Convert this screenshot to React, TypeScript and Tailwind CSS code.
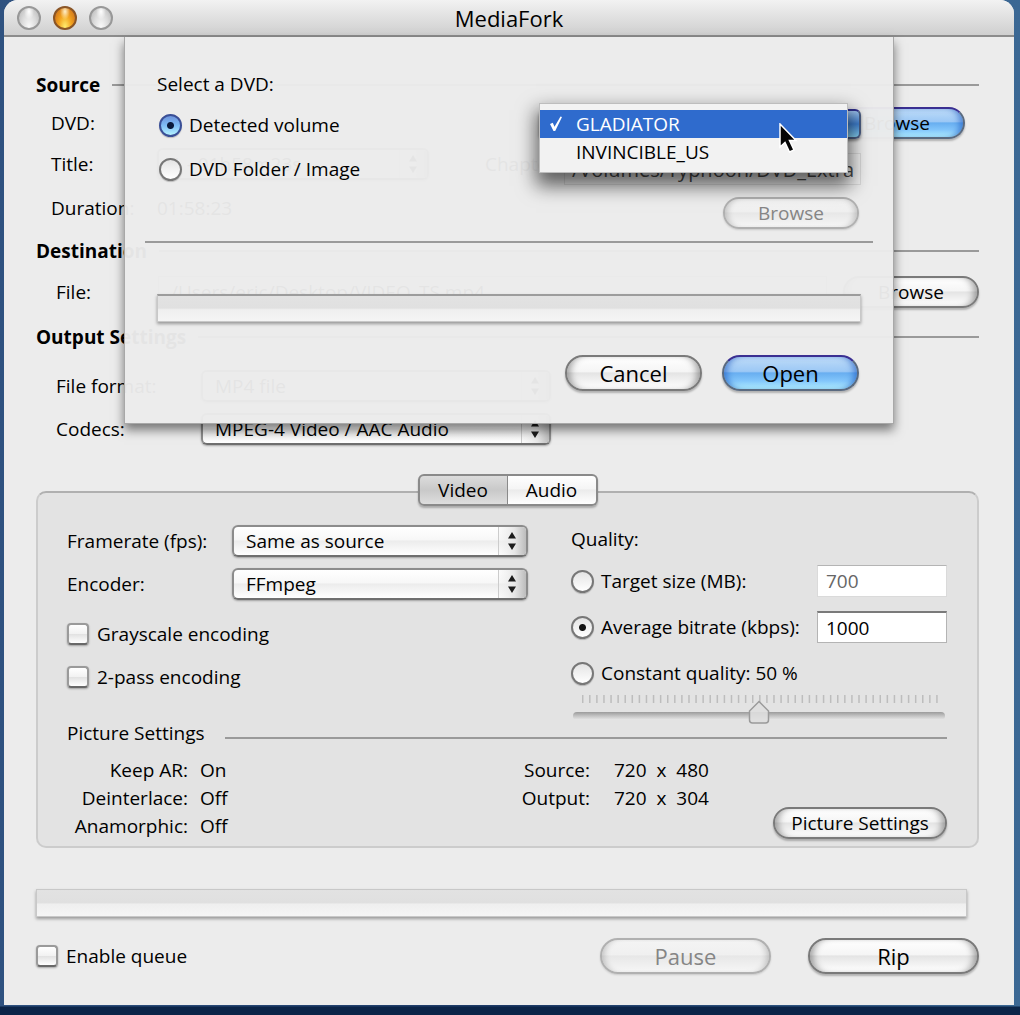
import { useState } from "react";
import type { ReactNode } from "react";
import clsx from "clsx";

const FIELD_ROW = "flex h-8 items-center";

function PushButton({
  children,
  variant = "plain",
  size = "small",
  disabled,
  className,
}: {
  children: ReactNode;
  variant?: "plain" | "default";
  size?: "small" | "large";
  disabled?: boolean;
  className?: string;
}) {
  return (
    <button
      type="button"
      disabled={disabled}
      className={clsx(
        "shrink-0 rounded-full border-2 text-center whitespace-nowrap",
        size === "large" ? "h-9 text-[22px] leading-[30px]" : "h-8 text-[19px] leading-7",
        variant === "default" &&
          "border-[#5a6a80] border-t-[#3a2f92] bg-[linear-gradient(#bfdcf8_0%,#9cc8f5_45%,#68aef0_50%,#83c6fb_75%,#b4f1ff_100%)] text-black shadow-[0_2px_2px_rgba(0,0,0,0.25),inset_6px_0_6px_-3px_rgba(25,85,190,0.6),inset_-6px_0_6px_-3px_rgba(25,85,190,0.6)]",
        variant === "plain" &&
          !disabled &&
          "border-[#7a7a7a] bg-[linear-gradient(#ffffff_0%,#f5f5f5_46%,#e4e4e4_50%,#f2f2f2_75%,#ffffff_100%)] text-black shadow-[0_2px_2px_rgba(0,0,0,0.25),inset_7px_0_7px_-4px_rgba(0,0,0,0.35),inset_-7px_0_7px_-4px_rgba(0,0,0,0.35)]",
        variant === "plain" &&
          disabled &&
          "border-[#b0b0b0] bg-[linear-gradient(#f4f4f4_0%,#f0f0f0_46%,#e7e7e7_50%,#f6f6f6_100%)] text-[#858585] shadow-[0_1px_2px_rgba(0,0,0,0.15),inset_6px_0_6px_-4px_rgba(0,0,0,0.2),inset_-6px_0_6px_-4px_rgba(0,0,0,0.2)]",
        className,
      )}
    >
      {children}
    </button>
  );
}

function PopUp({ id, options, className }: { id: string; options: string[]; className?: string }) {
  return (
    <div className={clsx("relative", className)}>
      <select
        id={id}
        className="h-8 w-full appearance-none rounded-md border-2 border-[#8c8c8c] border-b-[#6f6f6f] bg-[linear-gradient(#ffffff_0%,#f7f7f7_46%,#ececec_50%,#ffffff_100%)] pr-8 pl-3 text-[19px] leading-7 text-black shadow-[0_1px_2px_rgba(0,0,0,0.3)]"
      >
        {options.map((o) => (
          <option key={o}>{o}</option>
        ))}
      </select>
      <svg
        className="pointer-events-none absolute top-0.5 right-0.5 h-7 w-7"
        viewBox="0 0 28 28"
        aria-hidden="true"
      >
        <defs>
          <linearGradient id={`${id}-cap`} x1="0" x2="1" y1="0" y2="0">
            <stop offset="0" stopColor="#f4f4f4" stopOpacity="0.3" />
            <stop offset="0.6" stopColor="#e6e6e6" />
            <stop offset="1" stopColor="#bcbcbc" />
          </linearGradient>
        </defs>
        <path d="M0 0h24q4 0 4 4v20q0 4-4 4H0z" fill={`url(#${id}-cap)`} />
        <path d="M0.5 0v28" stroke="#cccccc" />
        <path d="M14 5l4 6.500h-8zM14 23l4-6.500h-8z" fill="#1c1c1c" />
      </svg>
    </div>
  );
}

function Radio({
  id,
  name,
  label,
  checked,
  onChange,
  blue,
}: {
  id: string;
  name: string;
  label: string;
  checked: boolean;
  onChange: () => void;
  blue?: boolean;
}) {
  return (
    <div className="flex items-center gap-[7px]">
      <input
        id={id}
        name={name}
        type="radio"
        checked={checked}
        onChange={onChange}
        className={clsx(
          "size-[23px] shrink-0 appearance-none rounded-full border-2 shadow-[0_1px_1px_rgba(0,0,0,0.2)]",
          blue
            ? "border-[#777777] bg-[linear-gradient(#e4e4e4,#ffffff)] checked:border-[#3a4f96] checked:bg-[radial-gradient(circle_at_50%_50%,#0b1a3c_0,#0b1a3c_3px,transparent_4px),linear-gradient(#6d93dc,#7fbdf6_50%,#b5f2ff)]"
            : "border-[#777777] bg-[linear-gradient(#e4e4e4,#ffffff)] checked:bg-[radial-gradient(circle_at_50%_50%,#141414_0,#141414_3px,transparent_4px),linear-gradient(#e4e4e4,#ffffff)]",
        )}
      />
      <label htmlFor={id} className="whitespace-nowrap">
        {label}
      </label>
    </div>
  );
}

function CheckBox({ id, label }: { id: string; label: string }) {
  return (
    <div className="flex h-6 items-center gap-2">
      <input
        id={id}
        type="checkbox"
        className="size-[22px] shrink-0 appearance-none rounded-[4px] border-2 border-[#9a9a9a] border-b-[#686868] bg-[linear-gradient(#ffffff_0%,#f2f2f2_48%,#e2e2e2_52%,#ffffff_100%)] shadow-[0_1px_2px_rgba(0,0,0,0.3)] checked:bg-[linear-gradient(#b9d8f8,#5fa8ee)]"
      />
      <label htmlFor={id}>{label}</label>
    </div>
  );
}

function SectionTitle({ children, className }: { children: string; className?: string }) {
  return (
    <div className={clsx("flex h-6 items-center gap-3", className)}>
      <h2 className="font-bold">{children}</h2>
      <div className="h-0.5 flex-1 bg-[#9a9a9a]" />
    </div>
  );
}

function TrafficLight({ label, amber }: { label: string; amber?: boolean }) {
  return (
    <button
      type="button"
      aria-label={label}
      className={clsx(
        "size-6 rounded-full border-2",
        amber
          ? "border-[#8a5526] bg-[radial-gradient(ellipse_at_50%_18%,#fff0c8_0,transparent_35%),radial-gradient(ellipse_at_50%_95%,#ffee70_0,#f3a41f_45%,#c3631a_100%)]"
          : "border-[#989898] bg-[radial-gradient(ellipse_at_50%_18%,#ffffff_0,transparent_35%),radial-gradient(ellipse_at_50%_95%,#fafafa_0,#dcdcdc_50%,#b4b4b4_100%)]",
      )}
    />
  );
}

function ProgressBar({ label, className }: { label: string; className?: string }) {
  return (
    <div
      role="progressbar"
      aria-label={label}
      aria-valuenow={0}
      className={clsx(
        "h-7 border border-[#c8c8c8] bg-[linear-gradient(#e2e2e2_0%,#e0e0e0_48%,#efefef_55%,#f5f5f5_100%)] shadow-[0_2px_3px_rgba(0,0,0,0.35)]",
        className,
      )}
    />
  );
}

function QualitySlider() {
  const [value, setValue] = useState(50);
  return (
    <div className="relative mt-[3px] h-[27px]">
      <svg className="absolute inset-x-[11px] top-0 h-3 w-[calc(100%-20px)]" aria-hidden="true">
        {Array.from({ length: 51 }, (_, i) => (
          <line
            key={i}
            x1={`${0.2 + i * 1.99}%`}
            x2={`${0.2 + i * 1.99}%`}
            y1="1"
            y2="9"
            stroke="#bdbdbd"
            strokeWidth="1.500"
          />
        ))}
      </svg>
      <div className="absolute inset-x-0.5 top-[18px] h-2 rounded-full bg-[linear-gradient(#9b9b9b,#c4c4c4_50%,#e8e8e8)]" />
      <svg
        className="absolute top-1.5 h-6 w-[22px] -translate-x-1/2"
        style={{ left: `${value}%` }}
        viewBox="0 0 22 24"
        aria-hidden="true"
      >
        <path
          d="M11 1.500L20.500 11v9q0 3-3 3h-13q-3 0-3-3v-9z"
          fill="#dedede"
          fillOpacity="0.9"
          stroke="#9a9a9a"
          strokeWidth="1.500"
        />
      </svg>
      <input
        type="range"
        aria-label="Constant quality"
        value={value}
        onChange={(e) => setValue(Number(e.target.value))}
        className="absolute inset-0 h-full w-full opacity-0"
      />
    </div>
  );
}

function VolumeMenu() {
  return (
    <div className="absolute -top-1.5 left-0 z-10 w-[309px]">
      <ul
        role="listbox"
        aria-label="Detected volumes"
        className="h-[70px] border border-[#bdbdbd] bg-[#f2f2f2] pt-1.5 shadow-[0_10px_18px_3px_rgba(0,0,0,0.6)]"
      >
        <li
          role="option"
          aria-selected="true"
          className="flex h-7 items-center bg-[#2f6bcd] text-white"
        >
          <svg className="ml-2 mr-3 h-4 w-4" viewBox="0 0 16 16" aria-hidden="true">
            <path d="M2 8l2.800-1.200 1.700 4L12.500 0.500 14 1 7.200 15H5.500z" fill="#ffffff" />
          </svg>
          GLADIATOR
        </li>
        <li role="option" aria-selected="false" className="flex h-7 items-center pl-9">
          INVINCIBLE_US
        </li>
      </ul>
      <svg
        className="absolute top-5 right-[49px] h-8 w-[21px]"
        viewBox="0 0 21 32"
        aria-hidden="true"
      >
        <path
          d="M2 1v23l5-4.500 4.500 9.500 4.500-2-4.500-9.500h6.500z"
          fill="#050505"
          stroke="#ffffff"
          strokeWidth="1.500"
        />
      </svg>
    </div>
  );
}

function OpenSheet() {
  const [source, setSource] = useState("volume");
  return (
    <div
      role="dialog"
      aria-label="Select a DVD"
      className="absolute inset-x-[120px] top-0 z-20 border border-t-0 border-[#a8a8a8] bg-[#ebebeb]/97 px-8 pt-8 pb-8 shadow-[0_6px_10px_rgba(0,0,0,0.5)]"
    >
      <p className="h-[30px] leading-[30px]">Select a DVD:</p>

      <div className="mt-2.5 flex items-start justify-between">
        <div className="flex flex-col pl-0.5">
          <div className="flex h-8 items-center">
            <Radio
              id="src-volume"
              name="src"
              label="Detected volume"
              blue
              checked={source === "volume"}
              onChange={() => setSource("volume")}
            />
          </div>
          <div className="mt-3 flex h-8 items-center">
            <Radio
              id="src-folder"
              name="src"
              label="DVD Folder / Image"
              blue
              checked={source === "folder"}
              onChange={() => setSource("folder")}
            />
          </div>
        </div>

        <div className="relative flex w-[322px] flex-col items-end">
          <button
            type="button"
            aria-haspopup="listbox"
            aria-expanded="true"
            aria-label="Detected volume"
            className="h-[30px] w-full rounded-md border-2 border-[#4a5c80] border-t-[#2f2f8c] bg-[linear-gradient(#9dc3ef_0%,#3f7fd0_50%,#86d2f5_100%)] shadow-[0_2px_3px_rgba(0,0,0,0.4)]"
          />
          <input
            type="text"
            readOnly
            aria-label="DVD folder"
            defaultValue="/Volumes/Typhoon/DVD_Extra"
            className="mt-3.5 h-8 w-[297px] border border-[#d8d8d8] bg-[#ededed] px-1.5 text-right text-[20px] text-[#4a4a4a]"
          />
          <PushButton disabled className="mt-3 mr-0.5 w-[136px]">
            Browse
          </PushButton>
          <VolumeMenu />
        </div>
      </div>

      <hr className="-mx-3 mt-3 h-0.5 border-0 bg-[#9a9a9a]" />
      <ProgressBar label="Scan progress" className="mt-[51px] border-t-2 border-t-[#9c9c9c]" />

      <div className="mt-[33px] mr-0.5 flex justify-end gap-5">
        <PushButton size="large" className="w-[137px]">
          Cancel
        </PushButton>
        <PushButton size="large" variant="default" className="w-[137px]">
          Open
        </PushButton>
      </div>
    </div>
  );
}

function VideoPanel() {
  const [quality, setQuality] = useState("bitrate");
  return (
    <section className="-mt-[15px] rounded-[10px] border-2 border-[#cccccc] border-t-[#b0b0b0] bg-[#e3e3e3] pt-8 pr-[30px] pb-1.5 pl-[29px]">
      <div className="flex items-start gap-[43px]">
        <div className="flex flex-1 flex-col">
          <div className={FIELD_ROW}>
            <label htmlFor="framerate" className="w-[165px] shrink-0">
              Framerate (fps):
            </label>
            <PopUp id="framerate" options={["Same as source"]} className="flex-1" />
          </div>
          <div className={clsx(FIELD_ROW, "mt-[11px]")}>
            <label htmlFor="encoder" className="w-[165px] shrink-0">
              Encoder:
            </label>
            <PopUp id="encoder" options={["FFmpeg"]} className="flex-1" />
          </div>
          <div className="mt-[22px] flex flex-col gap-[19px]">
            <CheckBox id="grayscale" label="Grayscale encoding" />
            <CheckBox id="two-pass" label="2-pass encoding" />
          </div>
        </div>

        <div className="flex w-[376px] flex-col">
          <p className="h-7 leading-7">Quality:</p>
          <div className="mt-2.5 flex h-9 items-center justify-between">
            <Radio
              id="q-size"
              name="quality"
              label="Target size (MB):"
              checked={quality === "size"}
              onChange={() => setQuality("size")}
            />
            <input
              type="text"
              aria-label="Target size in MB"
              defaultValue="700"
              className="h-8 w-[130px] border border-[#dadada] border-t-[#b4b4b4] bg-white px-2 text-[#666666]"
            />
          </div>
          <div className="mt-2.5 flex h-9 items-center justify-between">
            <Radio
              id="q-bitrate"
              name="quality"
              label="Average bitrate (kbps):"
              checked={quality === "bitrate"}
              onChange={() => setQuality("bitrate")}
            />
            <input
              type="text"
              aria-label="Average bitrate in kbps"
              defaultValue="1000"
              className="h-8 w-[130px] border border-[#b4b4b4] border-t-2 border-t-[#7a7a7a] bg-white px-2"
            />
          </div>
          <div className="mt-2.5 flex h-9 items-center">
            <Radio
              id="q-constant"
              name="quality"
              label="Constant quality: 50 %"
              checked={quality === "constant"}
              onChange={() => setQuality("constant")}
            />
          </div>
          <QualitySlider />
        </div>
      </div>

      <div className="flex h-6 items-center gap-5">
        <h3>Picture Settings</h3>
        <div className="mt-2.5 h-0.5 flex-1 bg-[#9a9a9a]" />
      </div>

      <div className="mt-[11px] flex items-start">
        <dl className="grid w-[415px] grid-cols-[121px_1fr] gap-x-3 leading-7">
          <dt className="text-right">Keep AR:</dt>
          <dd>On</dd>
          <dt className="text-right">Deinterlace:</dt>
          <dd>Off</dd>
          <dt className="text-right">Anamorphic:</dt>
          <dd>Off</dd>
        </dl>
        <dl className="grid grid-cols-[108px_1fr] gap-x-6 leading-7">
          <dt className="text-right">Source:</dt>
          <dd className="whitespace-pre">720  x  480</dd>
          <dt className="text-right">Output:</dt>
          <dd className="whitespace-pre">720  x  304</dd>
        </dl>
        <PushButton className="mt-[51px] ml-auto w-[174px]">Picture Settings</PushButton>
      </div>
    </section>
  );
}

export default function App() {
  const [tab, setTab] = useState("Video");
  return (
    <div className="min-h-screen bg-[linear-gradient(0deg,#0b2448_8px,transparent_9px),linear-gradient(90deg,#2f5280,#1d3a66_50%,#3b6894)] pr-1.5 pb-2 pl-1 font-['Open_Sans','Noto_Sans',sans-serif] text-[19px] leading-6 text-black">
      <div className="overflow-hidden rounded-t-[14px] bg-[#ececec]">
        <header className="grid h-[37px] grid-cols-[1fr_auto_1fr] items-center border-b-2 border-[#8c8c8c] bg-[linear-gradient(#f2f2f2,#cfcfcf)] px-[13px]">
          <div className="flex gap-3">
            <TrafficLight label="Close" />
            <TrafficLight label="Minimize" amber />
            <TrafficLight label="Zoom" />
          </div>
          <h1 className="text-[22px]">MediaFork</h1>
        </header>

        <main className="relative pt-9 pr-[35px] pb-[31px] pl-8">
          <SectionTitle>Source</SectionTitle>
          <div className={clsx(FIELD_ROW, "mt-2.5 justify-between pl-[15px]")}>
            <span>DVD:</span>
            <PushButton variant="default" className="mr-3.5 w-[136px]">
              Browse
            </PushButton>
          </div>
          <div className={clsx(FIELD_ROW, "mt-[9px] pl-[15px]")}>
            <label htmlFor="title" className="w-[106px]">
              Title:
            </label>
            <PopUp id="title" options={["1 - 01h58m23s"]} className="w-[272px]" />
            <span className="ml-14">Chapters:</span>
          </div>
          <div className={clsx(FIELD_ROW, "mt-3 pl-[15px]")}>
            <span className="w-[106px]">Duration:</span>
            <span>01:58:23</span>
          </div>
          <SectionTitle className="mt-[15px]">Destination</SectionTitle>
          <div className={clsx(FIELD_ROW, "mt-[13px] pl-5")}>
            <label htmlFor="file" className="w-[102px]">
              File:
            </label>
            <input
              id="file"
              type="text"
              defaultValue="/Users/eric/Desktop/VIDEO_TS.mp4"
              className="h-8 flex-1 border border-[#c6c6c6] bg-white px-3"
            />
            <PushButton className="ml-4 w-[136px]">Browse</PushButton>
          </div>
          <SectionTitle className="mt-[17px]">Output Settings</SectionTitle>
          <div className={clsx(FIELD_ROW, "mt-[21px] pl-5")}>
            <label htmlFor="format" className="w-[145px]">
              File format:
            </label>
            <PopUp id="format" options={["MP4 file"]} className="w-[350px]" />
          </div>
          <div className={clsx(FIELD_ROW, "mt-[11px] pl-5")}>
            <label htmlFor="codecs" className="w-[145px]">
              Codecs:
            </label>
            <PopUp id="codecs" options={["MPEG-4 Video / AAC Audio"]} className="w-[350px]" />
          </div>

          <div className="relative z-10 mt-[29px] flex justify-center">
            <div role="tablist" className="flex rounded-md shadow-[0_2px_2px_rgba(0,0,0,0.25)]">
              {["Video", "Audio"].map((t) => (
                <button
                  key={t}
                  type="button"
                  role="tab"
                  aria-selected={tab === t}
                  onClick={() => setTab(t)}
                  className={clsx(
                    "h-8 w-[90px] border-2 border-[#8a8a8a] leading-7 first:rounded-l-md first:border-r last:rounded-r-md last:border-l-0",
                    tab === t
                      ? "bg-[linear-gradient(#dcdcdc,#c9c9c9_50%,#dedede)]"
                      : "bg-[linear-gradient(#ffffff_0%,#f5f5f5_46%,#ebebeb_50%,#ffffff_100%)]",
                  )}
                >
                  {t}
                </button>
              ))}
            </div>
          </div>
          <VideoPanel />

          <ProgressBar label="Encode progress" className="mt-[41px] mr-3" />
          <div className="mt-[21px] flex items-center">
            <div className="flex-1">
              <CheckBox id="queue" label="Enable queue" />
            </div>
            <PushButton size="large" disabled className="mr-[37px] w-[171px]">
              Pause
            </PushButton>
            <PushButton size="large" className="w-[171px]">
              Rip
            </PushButton>
          </div>

          <OpenSheet />
        </main>
      </div>
    </div>
  );
}
